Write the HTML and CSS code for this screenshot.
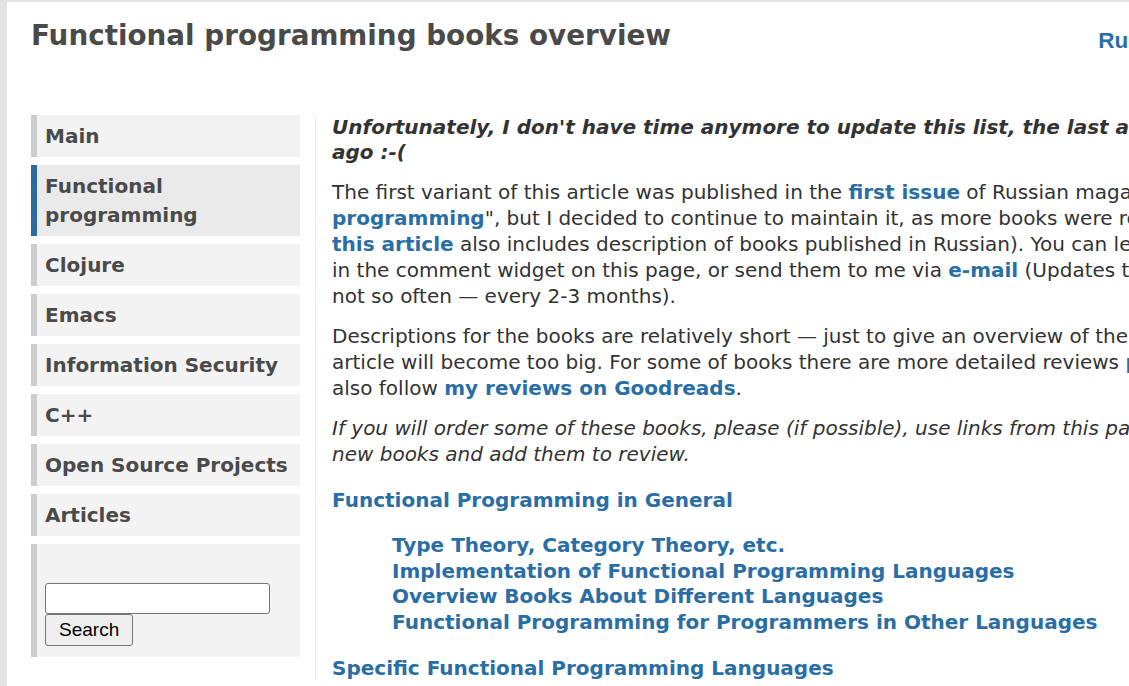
FILE: index.html
```html
<!DOCTYPE html>
<html lang="en">
<head>
<meta charset="utf-8">
<title>Functional programming books overview</title>
<link rel="stylesheet" href="styles.css">
</head>
<body>
<div class="page">
  <header class="header">
    <h1 class="title">Functional programming books overview</h1>
    <a class="lang" href="#">Russian version</a>
  </header>
  <div class="layout">
    <nav class="sidebar">
      <a class="nav-item" href="#">Main</a>
      <a class="nav-item active" href="#">Functional programming</a>
      <a class="nav-item" href="#">Clojure</a>
      <a class="nav-item" href="#">Emacs</a>
      <a class="nav-item" href="#">Information Security</a>
      <a class="nav-item" href="#">C++</a>
      <a class="nav-item" href="#">Open Source Projects</a>
      <a class="nav-item" href="#">Articles</a>
      <form class="search">
        <input class="search-input" type="text">
        <button class="search-btn" type="button">Search</button>
      </form>
    </nav>
    <main class="content">
      <p class="notice">Unfortunately, I don't have time anymore to update this list, the last addition was made several years<br>ago :-(</p>
      <p>The first variant of this article was published in the <a href="#">first issue</a> of Russian magazine "Practice of functional<br><a href="#">programming</a>", but I decided to continue to maintain it, as more books were released (Russian version of<br><a href="#">this article</a> also includes description of books published in Russian). You can leave your comments<br>in the comment widget on this page, or send them to me via <a href="#">e-mail</a> (Updates to this page are made<br>not so often — every 2-3 months).</p>
      <p>Descriptions for the books are relatively short — just to give an overview of the books, otherwise the<br>article will become too big. For some of books there are more detailed reviews <a href="#">present</a>. You can<br>also follow <a href="#">my reviews on Goodreads</a>.</p>
      <p class="affiliate">If you will order some of these books, please (if possible), use links from this page — this will help me buy<br>new books and add them to review.</p>
      <h2 class="section"><a href="#">Functional Programming in General</a></h2>
      <ul class="toc">
        <li><a href="#">Type Theory, Category Theory, etc.</a></li>
        <li><a href="#">Implementation of Functional Programming Languages</a></li>
        <li><a href="#">Overview Books About Different Languages</a></li>
        <li><a href="#">Functional Programming for Programmers in Other Languages</a></li>
      </ul>
      <h2 class="section"><a href="#">Specific Functional Programming Languages</a></h2>
    </main>
  </div>
</div>
</body>
</html>
```
FILE: styles.css
```css
html, body {
  margin: 0;
  padding: 0;
  overflow: hidden;
}
body {
  background: #e4e4e4;
  font-family: "DejaVu Sans", Verdana, sans-serif;
  color: #333;
}
a {
  color: #2a6ea6;
  text-decoration: none;
  font-weight: bold;
}
.page {
  background: #fff;
  margin: 2px 0 0 7px;
  width: 1400px;
  padding: 0 0 40px 24px;
  box-sizing: border-box;
  min-height: 900px;
}
.header {
  display: flex;
  align-items: flex-start;
  width: 1241px;
  padding-top: 17px;
  height: 113px;
  box-sizing: border-box;
}
.title {
  margin: 0;
  font-size: 27.8px;
  line-height: 34px;
  font-weight: bold;
  color: #4a4a4a;
}
.lang {
  margin-left: auto;
  font-family: "Liberation Sans", Arial, sans-serif;
  font-size: 22.5px;
  line-height: 24px;
  margin-top: 10px;
}
.layout {
  display: flex;
  align-items: flex-start;
}
.sidebar {
  width: 269px;
  flex: none;
  display: flex;
  flex-direction: column;
  gap: 8px;
}
.nav-item {
  display: block;
  background: #f3f3f3;
  border-left: 6px solid #cccccc;
  padding: 7px 8px;
  font-size: 20px;
  line-height: 28px;
  color: #4a4a4a;
}
.nav-item.active {
  background: #eaeaea;
  border-left-color: #2a6ca0;
  line-height: 28.5px;
}
.search {
  margin: 0;
  background: #f3f3f3;
  border-left: 6px solid #cccccc;
  padding: 39px 8px 11px;
  display: flex;
  flex-direction: column;
  align-items: flex-start;
}
.search-input {
  width: 225px;
  height: 31px;
  box-sizing: border-box;
  border: 1px solid #767676;
  border-radius: 3px;
  margin: 0;
  background: #fff;
}
.search-btn {
  font-family: "Liberation Sans", Arial, sans-serif;
  font-size: 19px;
  height: 32px;
  padding: 0 13px;
  margin: 0;
  border: 1px solid #767676;
  border-radius: 3px;
  background: #efefef;
  color: #000;
}
.content {
  margin-left: 15px;
  border-left: 1px solid #eeeeee;
  padding-left: 16px;
  font-size: 20px;
  line-height: 26px;
  flex: 1;
}
.content p {
  margin: 0 0 14px;
  white-space: nowrap;
}
.notice {
  font-style: italic;
  font-weight: bold;
  line-height: 25px;
}
.affiliate {
  font-style: italic;
}
.section {
  margin: 20px 0 0;
  font-size: 20px;
  line-height: 26px;
}
.toc {
  margin: 20px 0 20px;
  padding-left: 60px;
  list-style: none;
  font-size: 20px;
  line-height: 25.5px;
}
```
